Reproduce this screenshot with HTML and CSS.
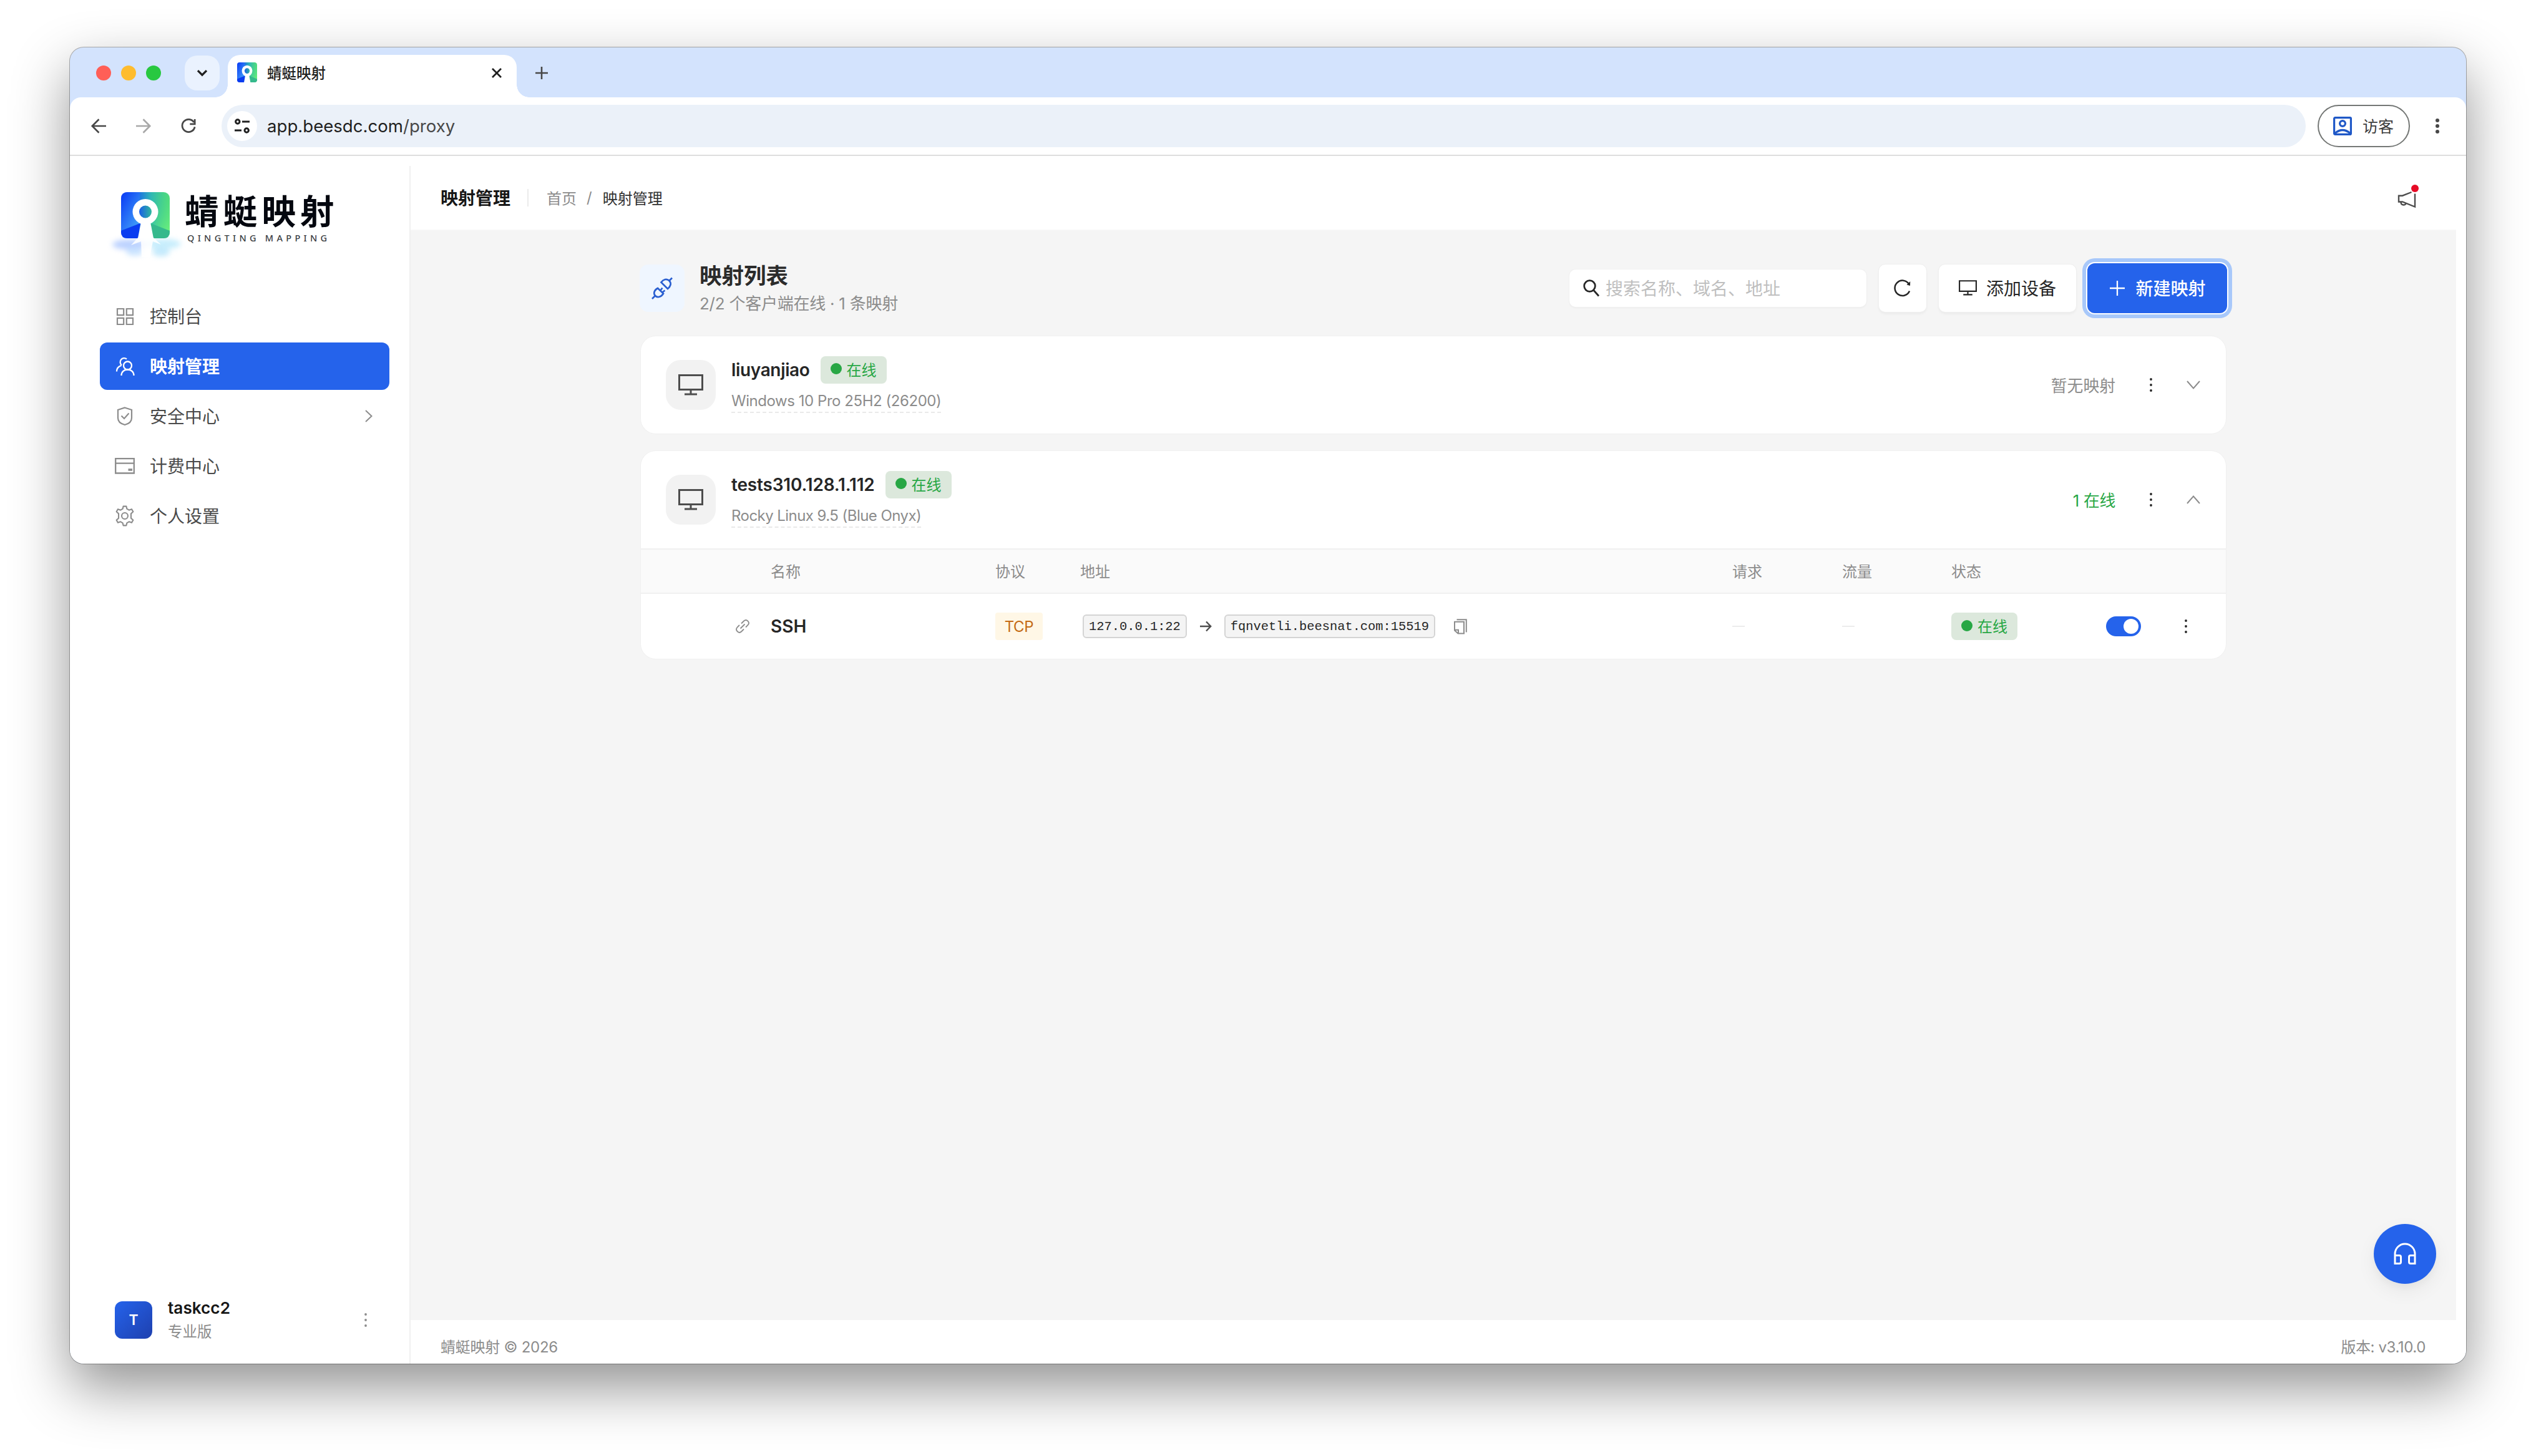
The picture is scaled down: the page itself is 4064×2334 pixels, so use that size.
FILE: index.html
```html
<!DOCTYPE html>
<html lang="zh-CN">
<head>
<meta charset="utf-8">
<title>蜻蜓映射</title>
<link rel="stylesheet" href="styles.css">
</head>
<body>
<svg width="0" height="0" class="defs">
  <defs>
    <linearGradient id="lg-base" x1="0" y1="0" x2="1" y2="0"><stop offset="0" stop-color="#0838f5"/><stop offset=".35" stop-color="#1b6fe6"/><stop offset=".62" stop-color="#2fb8b4"/><stop offset="1" stop-color="#55e070"/></linearGradient>
    <linearGradient id="lg-ray" x1="0" y1="0" x2=".7" y2="1"><stop offset="0" stop-color="#0838f5"/><stop offset="1" stop-color="#49a8fb"/></linearGradient>
    <linearGradient id="lg-ray2" x1=".3" y1="0" x2="1" y2="1"><stop offset="0" stop-color="#35c79b" stop-opacity="0"/><stop offset="1" stop-color="#6cf07c"/></linearGradient>
    <linearGradient id="lg-hole" x1="0" y1="0" x2="1" y2="0"><stop offset="0" stop-color="#1a5fe8"/><stop offset="1" stop-color="#2fb89c"/></linearGradient>
    <filter id="soft" x="-30%" y="-60%" width="160%" height="220%"><feGaussianBlur stdDeviation="4"/></filter>
    <symbol id="mark" viewBox="0 0 78 74">
      <rect width="78" height="74" rx="10" fill="url(#lg-base)"/>
      <path d="M10 0H30V50L0 62V10Q0 0 10 0Z" fill="url(#lg-ray)" opacity=".8"/>
      <path d="M50 0H68Q78 0 78 10V62L46 49Z" fill="url(#lg-ray2)"/>
      <path d="M0 62L31 50L27 74H10Q0 74 0 64Z" fill="#0a3cf0"/>
      <path d="M78 62L47 50L52 74H68Q78 74 78 64Z" fill="#35b98c"/>
      <path d="M32 48H47L52 74H27Z" fill="#fff"/>
      <circle cx="39" cy="31.500" r="20.500" fill="#fff"/>
      <circle cx="39" cy="31.500" r="10" fill="url(#lg-hole)"/>
    </symbol>
    <symbol id="monitor" viewBox="0 0 40 34">
      <path d="M1.500 1.500H38.500V24.500H1.500ZM20 25V31M10 32H30" fill="none" stroke="currentColor" stroke-width="3"/>
    </symbol>
    <symbol id="dots" viewBox="0 0 6 24">
      <circle cx="3" cy="3" r="1.900" fill="currentColor"/><circle cx="3" cy="12" r="1.900" fill="currentColor"/><circle cx="3" cy="21" r="1.900" fill="currentColor"/>
    </symbol>
  </defs>
</svg>

<div class="window">
  <div class="tabstrip">
    <div class="lights"><i class="red"></i><i class="yellow"></i><i class="green"></i></div>
    <div class="tab-search"><svg width="18" height="13" viewBox="0 0 16 12"><path d="M1.500 2L8 8.500L14.500 2" fill="none" stroke="#1f1f1f" stroke-width="3"/></svg></div>
    <div class="tab">
      <svg class="favicon" viewBox="0 0 78 74" preserveAspectRatio="none"><use href="#mark" width="78" height="74"/></svg>
      <span class="tab-title">蜻蜓映射</span>
      <svg width="16" height="16" viewBox="0 0 16 16"><path d="M1 1L15 15M15 1L1 15" stroke="#1f1f1f" stroke-width="2.800"/></svg>
    </div>
    <svg class="newtab" width="20" height="20" viewBox="0 0 20 20"><path d="M10 0V20M0 10H20" stroke="#474747" stroke-width="2.600"/></svg>
  </div>

  <div class="toolbar">
    <svg width="24" height="24" viewBox="0 0 24 24"><path d="M24 12H2M12.500 1.200L1.800 12L12.500 22.800" fill="none" stroke="#474747" stroke-width="2.700"/></svg>
    <svg width="24" height="24" viewBox="0 0 24 24"><path d="M0 12H22M11.500 1.200L22.200 12L11.500 22.800" fill="none" stroke="#a8a8a8" stroke-width="2.700"/></svg>
    <svg width="24" height="24" viewBox="0 0 26 26"><path d="M22.500 6.500A11 11 0 1 0 24 14.500M24 1V9.500H15.500" fill="none" stroke="#474747" stroke-width="3"/></svg>
    <div class="omnibox">
      <span class="site"><svg width="24" height="24" viewBox="0 0 24 24" fill="none" stroke="#1f1f1f" stroke-width="3"><circle cx="4.800" cy="5" r="3.200"/><path d="M12 5H24M0 19H11"/><circle cx="19.200" cy="19" r="3.200"/></svg></span>
      <span class="url">app.beesdc.com<em>/proxy</em></span>
    </div>
    <div class="guest">
      <svg width="30" height="30" viewBox="0 0 30 30" fill="none" stroke="#1f58c7" stroke-width="3.200"><rect x="1.600" y="1.600" width="26.800" height="26.800" rx="1.500"/><circle cx="15" cy="11" r="4.400"/><path d="M3 26.500Q15 16.500 27 26.500"/></svg>
      <span>访客</span>
    </div>
    <svg class="kebab" width="6" height="24" viewBox="0 0 6 24" fill="#474747"><circle cx="3" cy="3" r="3"/><circle cx="3" cy="12" r="3"/><circle cx="3" cy="21" r="3"/></svg>
  </div>

  <div class="app">
    <aside class="sidebar">
      <div class="brand">
        <svg class="logo" width="126" height="108" viewBox="0 0 126 108">
          <g filter="url(#soft)" opacity=".6">
            <ellipse cx="34" cy="84" rx="28" ry="8" fill="#8fb4ff"/><ellipse cx="88" cy="83" rx="28" ry="8" fill="#a3e2fb"/>
            <ellipse cx="42" cy="96" rx="14" ry="6" fill="#a9d4ff"/><ellipse cx="84" cy="96" rx="14" ry="7" fill="#9ddcfa"/>
          </g>
          <use href="#mark" x="20" y="0" width="78" height="74"/>
          <path d="M47 73H72L84 84L71 79L66 104H53L52 79L36 85Z" fill="#fff" opacity=".85"/>
        </svg>
        <div class="brand-text"><b>蜻蜓映射</b><small>QINGTING MAPPING</small></div>
      </div>
      <nav class="menu">
        <div class="item"><svg width="32" height="32" viewBox="0 0 32 32" fill="none" stroke="currentColor" stroke-width="2.200"><path d="M4 4H14.200V14.200H4ZM18.800 4H29V14.200H18.800ZM4 18.800H14.200V29H4ZM18.800 18.800H29V29H18.800Z"/></svg><span>控制台</span></div>
        <div class="item active"><svg width="32" height="32" viewBox="0 0 32 32" fill="none" stroke="currentColor" stroke-width="2.300"><circle cx="20.500" cy="15" r="6.500"/><path d="M10.500 31C10.500 25.500 14.500 21.500 20.500 21.500S30.500 25.500 30.500 31M19 4.500A6.300 6.300 0 1 0 11 14.500M3 24.500C3 19.500 6 16.200 10.500 14.800"/></svg><span>映射管理</span></div>
        <div class="item"><svg width="32" height="32" viewBox="0 0 32 32" fill="none" stroke="currentColor" stroke-width="2.200"><path d="M16 2.500L27 6V19C27 25 22 28.500 16 30C10 28.500 5 25 5 19V6ZM10.500 15.500L15 20L22.500 11.500"/></svg><span>安全中心</span><svg class="chev" width="12" height="20" viewBox="0 0 12 20"><path d="M1 1L10.500 10L1 19" fill="none" stroke="currentColor" stroke-width="2"/></svg></div>
        <div class="item"><svg width="32" height="32" viewBox="0 0 32 32" fill="none" stroke="currentColor" stroke-width="2.300"><path d="M1.200 4.200H30.800V27.500H1.200ZM1.200 11.700H30.800"/><path d="M21.500 22H28" stroke-width="3.600"/></svg><span>计费中心</span></div>
        <div class="item"><svg width="32" height="32" viewBox="-1 -1.700 34 35.400" fill="none" stroke="currentColor" stroke-width="2.300" stroke-linejoin="round"><circle cx="16" cy="16" r="5.500"/><path d="M13.300 -1H18.700L19.700 3.500L23.500 5.700L28.200 4L30.800 8.600L27 12V20L30.800 23.400L28.200 28L23.500 26.300L19.700 28.500L18.700 33H13.300L12.300 28.500L8.500 26.300L3.800 28L1.200 23.400L5 20V12L1.200 8.600L3.800 4L8.500 5.700L12.300 3.500Z"/></svg><span>个人设置</span></div>
      </nav>
      <div class="user">
        <div class="avatar">T</div>
        <div class="who"><b>taskcc2</b><span>专业版</span></div>
        <svg class="dots" width="6" height="24"><use href="#dots"/></svg>
      </div>
    </aside>

    <main class="main">
      <header class="topbar">
        <h1>映射管理</h1><i class="rule"></i>
        <span class="crumb">首页</span><span class="crumb sep">/</span><span class="crumb here">映射管理</span>
        <div class="notice">
          <svg width="30" height="30" viewBox="0 0 30 30" fill="none" stroke="#4d4d4d" stroke-width="2.400"><path d="M22.500 4L8 9.700H2V19.500H8L28 27.500V6.500"/><path d="M5.500 20C5.500 25.500 13 26 13.500 21.500"/></svg>
          <i></i>
        </div>
      </header>

      <section class="content">
        <div class="listhead">
          <div class="plug"><svg width="36" height="36" viewBox="0 0 36 36" fill="none" stroke="#2a5fd0" stroke-width="2.700"><path d="M2 34L7.500 28.500M11 17C5.500 20 3.500 25 7 29S17 31 20 25.500ZM15 21L18.500 16.500M18 24L22.500 20.500" transform="translate(0 1)"/><path d="M34 1.500L29.500 6M16.500 8.500L27 19C31.500 15.500 33.500 10 29.500 6S20 4 16.500 8.500Z"/></svg></div>
          <div class="titles"><h2>映射列表</h2><p>2/2 个客户端在线 · 1 条映射</p></div>
          <div class="search"><svg width="26" height="28" viewBox="0 0 26 28" fill="none" stroke="#262626" stroke-width="2.800"><circle cx="10.500" cy="10.500" r="8.800"/><path d="M17 17.500L25 26.500"/></svg><span>搜索名称、域名、地址</span></div>
          <div class="btn square"><svg width="28" height="28" viewBox="0 0 28 28" fill="none" stroke="#262626" stroke-width="2.500"><path d="M25 18.500A12.200 12.200 0 1 1 24 7.200"/><path d="M26.200 3L26 10L20.500 8.600Z" fill="#262626" stroke="none"/></svg></div>
          <div class="btn device"><svg width="29" height="26"><use href="#monitor" width="29" height="25"/></svg><span>添加设备</span></div>
          <div class="btn primary"><svg width="24" height="24" viewBox="0 0 24 24"><path d="M12 0V24M0 12H24" stroke="#fff" stroke-width="2.300"/></svg><span>新建映射</span></div>
        </div>

        <article class="card">
          <div class="client">
            <div class="pc"><svg width="40" height="34"><use href="#monitor"/></svg></div>
            <div class="meta">
              <div class="line"><b class="n1">liuyanjiao</b><span class="badge"><i></i>在线</span></div>
              <span class="os o1">Windows 10 Pro 25H2 (26200)</span>
            </div>
            <span class="count">暂无映射</span>
            <svg class="dots" width="6" height="24"><use href="#dots"/></svg>
            <svg class="arrow" width="22" height="14" viewBox="0 0 22 14"><path d="M1 1L11 12.500L21 1" fill="none" stroke="currentColor" stroke-width="2"/></svg>
          </div>
        </article>

        <article class="card">
          <div class="client">
            <div class="pc"><svg width="40" height="34"><use href="#monitor"/></svg></div>
            <div class="meta">
              <div class="line"><b class="n2">tests310.128.1.112</b><span class="badge"><i></i>在线</span></div>
              <span class="os o2">Rocky Linux 9.5 (Blue Onyx)</span>
            </div>
            <span class="count ok">1 在线</span>
            <svg class="dots" width="6" height="24"><use href="#dots"/></svg>
            <svg class="arrow" width="22" height="14" viewBox="0 0 22 14"><path d="M1 13L11 1.500L21 13" fill="none" stroke="currentColor" stroke-width="2"/></svg>
          </div>
          <div class="row thead"><span></span><span>名称</span><span>协议</span><span>地址</span><span>请求</span><span>流量</span><span>状态</span></div>
          <div class="row tbody">
            <svg width="22" height="22" viewBox="0 0 22 22" fill="none" stroke="#8c8c8c" stroke-width="1.800"><path d="M9 6.500L13 2.500C17.500 -1.500 23.500 4.500 19.500 9L16 12.500M6 9L2.500 12.500C-1.500 17 4.500 23.500 9 19.500L13 15.500M7.500 14.500L14.500 7.500"/></svg>
            <b class="name">SSH</b>
            <span><span class="proto">TCP</span></span>
            <span class="addr"><code>127.0.0.1:22</code><svg width="19" height="18" viewBox="0 0 19 18" fill="none" stroke="#4d4d4d" stroke-width="2.400"><path d="M0 9H17M10 1.500L17.200 9L10 16.500"/></svg><code>fqnvetli.beesnat.com:15519</code><svg class="copy" width="21" height="25" viewBox="0 0 21 25" fill="none" stroke="#8c8c8c" stroke-width="2"><path d="M4.500 1.200H19.800V21.500M1 4.800H16V23.500H6.500L1 18.500ZM1.500 17.800H7V23"/></svg></span>
            <i class="dash"></i><i class="dash"></i>
            <span><span class="badge"><i></i>在线</span></span>
            <span class="toggle"><i></i></span>
            <svg class="dots" width="6" height="24"><use href="#dots"/></svg>
          </div>
        </article>
        <div class="fab"><svg width="36" height="36" viewBox="0 0 36 36" fill="none" stroke="#fff" stroke-width="3"><path d="M2 33V18A16 16 0 0 1 34 18V33M2 20.500H9Q11.500 20.500 11.500 23V31Q11.500 33.500 9 33.500H2ZM34 20.500H27Q24.500 20.500 24.500 23V31Q24.500 33.500 27 33.500H34Z"/></svg></div>
      </section>
      <footer class="foot"><span class="copyr">蜻蜓映射 © 2026</span><span class="ver">版本: v3.10.0</span></footer>
    </main>
  </div>
</div>
</body>
</html>
```
FILE: styles.css
```css
* { box-sizing: border-box; }
body { margin: 0; min-height: 100vh; padding: 76px 112px 0; background: #fff; font-family: Inter, "Noto Sans CJK SC", sans-serif; color: #262626; }
svg { flex: none; overflow: visible; display: block; }
i, em { font-style: normal; }
h1, h2, p { margin: 0; }
.defs { position: absolute; }

.window { width: 3840px; height: 2110px; border-radius: 22px; background: #d3e3fd; display: flex; flex-direction: column; overflow: hidden; box-shadow: 0 0 0 1px rgba(0,0,0,.3), 0 38px 90px rgba(0,0,0,.43); }

.tabstrip { height: 80px; display: flex; align-items: center; padding: 2px 0 0 42px; }
.lights { display: flex; gap: 16px; }
.lights i { width: 24px; height: 24px; border-radius: 50%; }
.red { background: #ff5f57; }
.yellow { background: #febc2e; }
.green { background: #28c840; }
.tab-search { width: 56px; height: 56px; margin-left: 38px; border-radius: 20px; background: #eaf2fe; display: flex; align-items: center; justify-content: center; }
.tab { position: relative; width: 463px; height: 68px; margin-left: 13px; align-self: flex-end; border-radius: 20px 20px 0 0; background: #fff; display: flex; align-items: center; padding: 0 24px 10px 15px; }
.tab::before, .tab::after { content: ""; position: absolute; bottom: 0; width: 20px; height: 20px; }
.tab::before { left: -20px; background: radial-gradient(circle at 0 0, transparent 19.500px, #fff 20px); }
.tab::after { right: -20px; background: radial-gradient(circle at 100% 0, transparent 19.500px, #fff 20px); }
.favicon { width: 32px; height: 32px; margin-bottom: 2px; }
.tab-title { flex: 1; margin-left: 16px; font-size: 23.500px; font-weight: 500; line-height: 30px; padding-top: 2px; color: #1f1f1f; }
.newtab { margin-left: 30px; }

.toolbar { height: 94px; display: flex; align-items: center; background: #fff; border-radius: 18px 18px 0 0; border-bottom: 2px solid #dedede; padding: 0 43px 0 34px; }
.toolbar > svg + svg { margin-left: 48px; }
.omnibox { flex: 1; height: 68px; margin-left: 41px; border-radius: 34px; background: #ebf1f9; display: flex; align-items: center; padding-left: 9px; }
.site { width: 48px; height: 48px; border-radius: 50%; background: #fff; display: flex; align-items: center; justify-content: center; }
.url { margin-left: 16px; font-size: 27.600px; line-height: 40px; color: #1f1f1f; }
.url em { color: #474747; }
.guest { width: 148px; height: 68px; margin-left: 19px; border: 2px solid #747775; border-radius: 34px; display: flex; align-items: center; gap: 17px; padding-left: 23px; font-size: 25px; color: #3c3c3c; }
.guest span { padding-bottom: 2px; }
.toolbar > .kebab { margin-left: 41px; }

.app { flex: 1; min-height: 0; display: flex; background: #fff; padding: 16px 16px 0 0; }
.sidebar { width: 546px; border-right: 2px solid #f0f0f0; padding: 42px 32px 39px 48px; display: flex; flex-direction: column; }
.brand { display: flex; height: 106px; padding-left: 14px; }
.brand-text { display: flex; flex-direction: column; color: #04070f; margin-left: -4px; }
.brand-text b { font-family: "Noto Sans CJK SC", sans-serif; font-size: 54.500px; font-weight: 700; letter-spacing: 7.200px; line-height: 60px; margin-top: -2px; white-space: nowrap; }
.brand-text small { font-family: "Noto Sans", sans-serif; font-size: 14.500px; line-height: 20px; letter-spacing: 5.300px; margin: 5px 0 0 4px; color: #3a3d42; font-weight: 500; white-space: nowrap; }
.menu { display: flex; flex-direction: column; gap: 4px; margin-top: 55px; color: #4a4a4a; }
.item { width: 464px; height: 76px; border-radius: 12px; display: flex; align-items: center; padding: 0 27px 0 24px; font-size: 28px; }
.item > svg { color: #8c8c8c; }
.item span { flex: 1; margin-left: 24px; padding-bottom: 3px; }
.item.active { background: #2563eb; color: #fff; font-weight: 600; }
.item.active > svg { color: #fff; }
.user { margin-top: auto; display: flex; align-items: center; padding-left: 24px; height: 62px; }
.avatar { width: 60px; height: 60px; border-radius: 12px; background: linear-gradient(135deg, #2563eb, #1e40af); color: #fff; font-size: 23px; font-weight: 600; display: flex; align-items: center; justify-content: center; }
.who { display: flex; flex-direction: column; margin-left: 25px; flex: 1; }
.who b { font-size: 26.200px; font-weight: 600; line-height: 38px; color: #171717; }
.who span { font-size: 23.500px; line-height: 38px; color: #8c8c8c; }
.user .dots { color: #8c8c8c; margin-right: 35px; }

.main { flex: 1; display: flex; flex-direction: column; min-width: 0; }
.topbar { height: 104px; display: flex; align-items: center; padding: 0 60px 0 48px; border-bottom: 2px solid #f7f7f7; }
.topbar h1 { font-size: 28px; font-weight: 700; color: #171717; padding-bottom: 2px; }
.rule { width: 2px; height: 28px; background: #ebebeb; margin: 0 29px 0 27px; }
.crumb { font-size: 24px; color: #8c8c8c; padding-bottom: 2px; }
.crumb.sep { margin: 0 17px 0 16px; }
.crumb.here { color: #303030; }
.notice { position: relative; margin: 3px 4px 0 auto; }
.notice i { position: absolute; width: 12px; height: 12px; right: -4px; top: -8px; border-radius: 50%; background: #e60b26; }

.content { position: relative; flex: 1; background: #f5f5f5; padding: 44px 369px 0; }
.listhead { display: flex; align-items: center; height: 96px; margin: 0 -2px 29px -2px; }
.plug { width: 72px; height: 76px; border-radius: 14px; background: #eff6ff; display: flex; align-items: center; justify-content: center; }
.titles { margin: 4px 0 0 24px; flex: 1; }
.titles h2 { font-size: 35.500px; font-weight: 700; line-height: 46px; color: #2b2b2b; }
.titles p { font-size: 26px; line-height: 42px; color: #8c8c8c; letter-spacing: -.25px; white-space: nowrap; }
.search { width: 476px; height: 60px; border-radius: 10px; background: #fff; box-shadow: 0 0 0 1px #f0f0f0, 0 2px 3px rgba(0,0,0,.04); display: flex; align-items: center; padding-left: 22px; font-size: 28px; color: #bfbfbf; }
.search span { margin-left: 10px; padding-bottom: 3px; white-space: nowrap; }
.btn { height: 76px; border-radius: 10px; background: #fff; box-shadow: 0 0 0 1px #efefef, 0 3px 4px rgba(0,0,0,.05); display: flex; align-items: center; justify-content: center; font-size: 28px; white-space: nowrap; }
.btn span { padding-bottom: 3px; }
.square { width: 76px; margin-left: 20px; }
.device { width: 220px; margin-left: 20px; gap: 15px; }
.primary { width: 224px; height: 80px; margin-left: 18px; border-radius: 12px; background: #2563eb; color: #fff; gap: 17px; padding-left: 2px; font-weight: 500; box-shadow: 0 0 0 2px #fff, 0 0 0 8px #a8c8fa; }

.card { background: #fff; border-radius: 24px; margin-bottom: 28px; overflow: hidden; box-shadow: 0 0 0 1px #f0f0f0; }
.client { height: 156px; display: flex; align-items: center; padding: 0 41px 0 40px; }
.pc { width: 80px; height: 80px; border-radius: 24px; background: #f2f2f2; color: #4d4d4d; display: flex; align-items: center; justify-content: center; }
.meta { flex: 1; margin: -2px 0 0 25px; display: flex; flex-direction: column; align-items: flex-start; }
.line { display: flex; align-items: center; height: 44px; }
.line b { font-size: 28px; font-weight: 600; white-space: nowrap; margin-right: 17px; }
.n1 { letter-spacing: -.35px; }
.n2 { letter-spacing: -.18px; }
.badge { display: inline-flex; align-items: center; width: 106px; height: 44px; border-radius: 8px; background: #dce8dc; color: #28a745; font-size: 24px; padding: 0 0 3px 16px; }
.badge i { width: 18px; height: 18px; border-radius: 50%; background: #28a745; margin-right: 8px; }
.os { font-size: 24px; line-height: 34px; margin-top: 11px; color: #8c8c8c; border-bottom: 2px dashed #e9e9e9; white-space: nowrap; }
.o1 { letter-spacing: -.45px; }
.o2 { letter-spacing: -.55px; }
.count { font-size: 25.800px; color: #8c8c8c; padding-bottom: 2px; }
.count.ok { color: #28a745; letter-spacing: -.3px; }
.client .dots { margin-left: 54px; color: #262626; }
.arrow { margin-left: 54px; color: #8c8c8c; }
.row { display: grid; grid-template-columns: 56px 360px 136px 1045px 176px 175px 248px 125px 6px; align-items: center; padding-left: 152px; font-size: 24px; }
.thead { height: 73px; background: #fafafa; border-top: 2px solid #f0f0f0; border-bottom: 2px solid #f0f0f0; color: #8c8c8c; padding-bottom: 3px; }
.tbody { height: 104px; }
.name { font-size: 28px; font-weight: 600; }
.proto { display: inline-block; width: 76px; height: 44px; line-height: 45px; border-radius: 4px; background: #fff7e6; color: #c46a14; text-align: center; letter-spacing: -.3px; }
.addr { display: flex; align-items: center; padding-left: 4px; }
.addr code { font-family: "Liberation Mono", monospace; font-size: 20.400px; line-height: 36px; height: 38px; border: 2px solid #d4d4d4; border-radius: 6px; background: #f4f4f4; padding: 0 8px; color: #262626; }
.addr svg { margin: 0 20px 0 21px; }
.addr .copy { margin-left: 30px; }
.dash { width: 20px; height: 2px; background: #ececec; }
.toggle { width: 56px; height: 32px; border-radius: 16px; background: #2563eb; display: flex; align-items: center; justify-content: flex-end; padding-right: 4px; }
.toggle i { width: 24px; height: 24px; border-radius: 50%; background: #fff; }
.fab { position: absolute; right: 32px; bottom: 58px; width: 100px; height: 96px; border-radius: 50%; background: #2563eb; box-shadow: 0 12px 32px rgba(0,0,0,.06), 0 6px 12px rgba(0,0,0,.03); display: flex; align-items: center; justify-content: center; }

.foot { height: 70px; display: flex; align-items: center; justify-content: space-between; padding: 12px 49px 0 48px; font-size: 24px; color: #8c8c8c; }
.copyr { letter-spacing: -.25px; }
.ver { letter-spacing: -.4px; }
```
